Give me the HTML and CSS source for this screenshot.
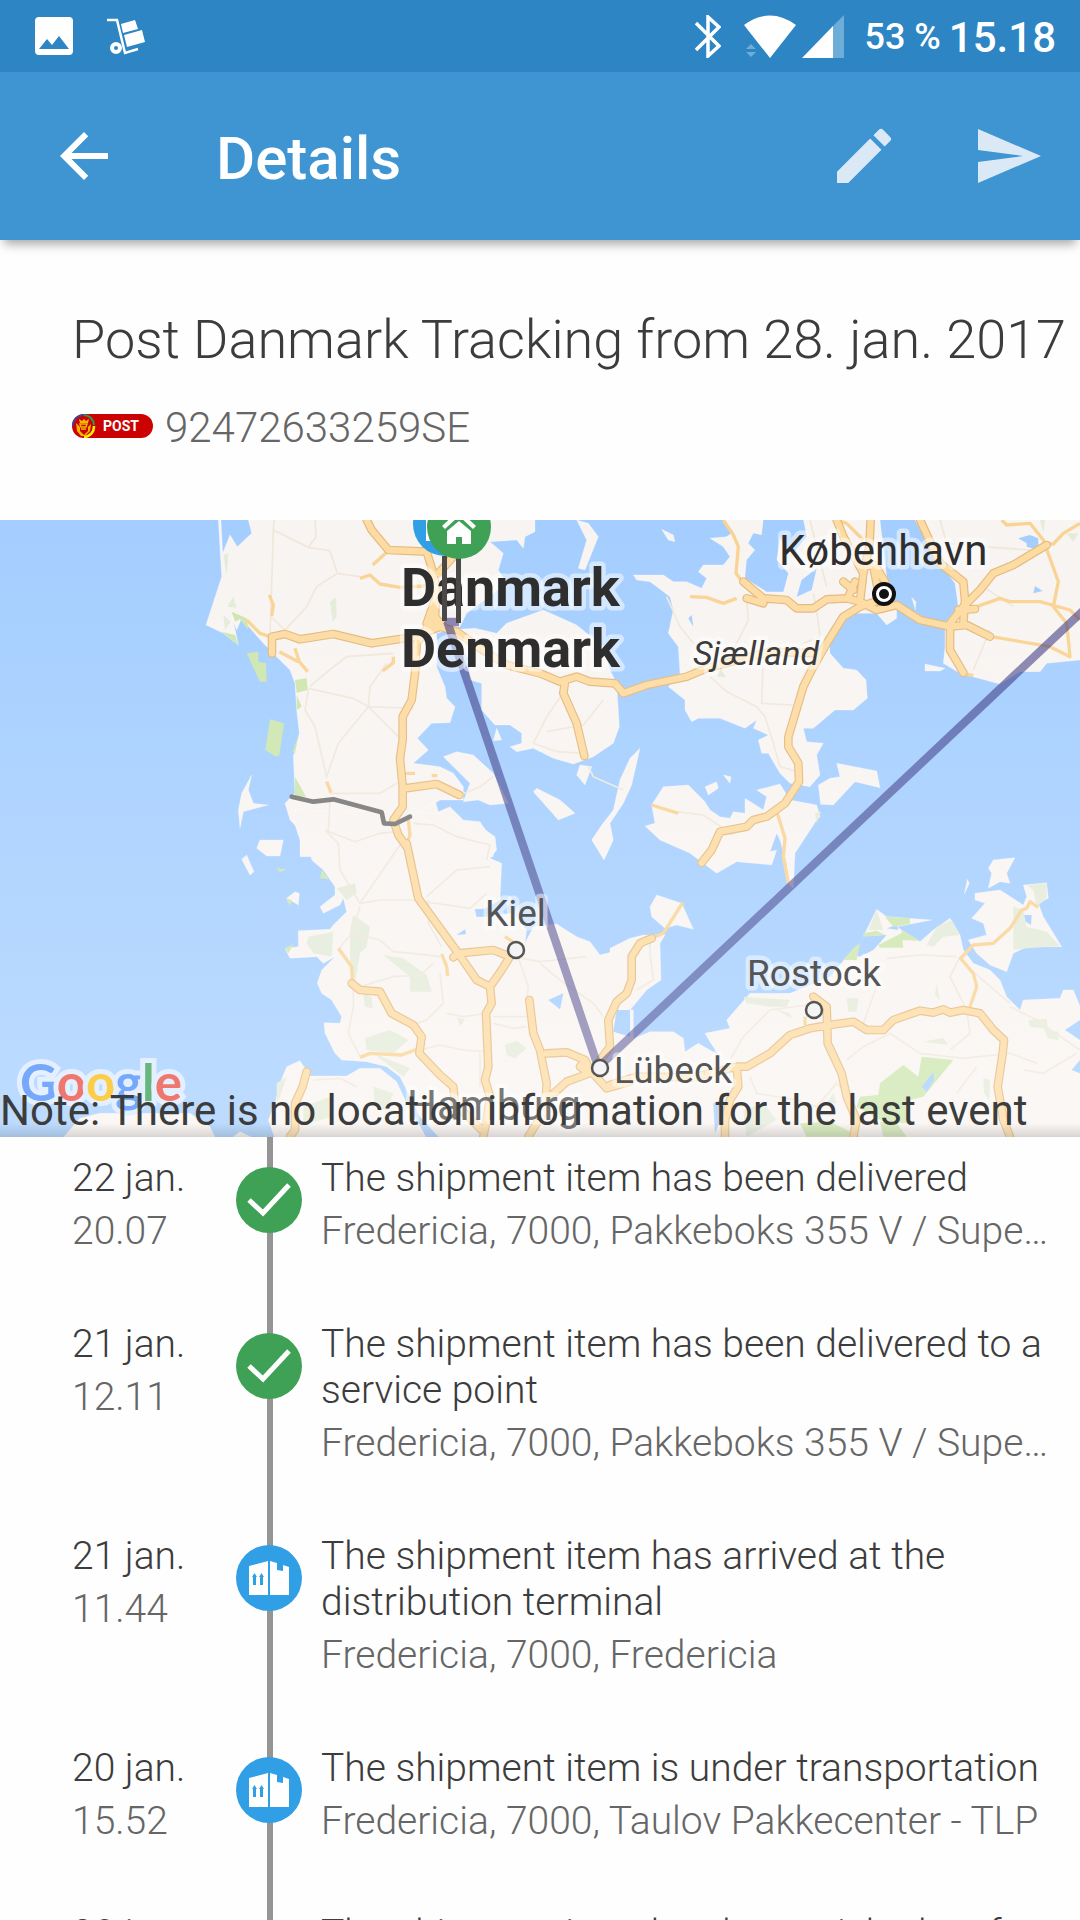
FILE: index.html
```html
<!DOCTYPE html>
<html lang="en">
<head>
  <meta charset="UTF-8" />
  <meta name="viewport" content="width=device-width, initial-scale=1.0"/>
  <title>Details</title>
  <link rel="stylesheet" href="styles.css">
</head>
<body>
  <!-- STATUS BAR -->
  <div class="status-bar">
    <svg class="status-icon" width="38" height="38" viewBox="0 0 38 38"><path fill="#fff" fill-rule="evenodd" d="M4 0h30a4 4 0 0 1 4 4v30a4 4 0 0 1-4 4H4a4 4 0 0 1-4-4V4a4 4 0 0 1 4-4zM4 32h30L24 19l-7 9-5-6z"/></svg>
    <svg class="status-icon" width="38" height="38" viewBox="0 0 38 38">
      <path d="M0 3h10l8 33 13-4" fill="none" stroke="#fff" stroke-width="2.5"/>
      <path fill="#fff" d="M14 7l14-4 3 9-15 4zM17 18l18-5 3 12-18 5z"/>
      <circle cx="9" cy="31" r="4" fill="none" stroke="#fff" stroke-width="4"/>
    </svg>
    <div class="status-right">
      <svg width="26" height="43" viewBox="0 0 26 43"><path d="M1 8l23 23-11 10V2l11 10L1 35" fill="none" stroke="#fff" stroke-width="3.5"/></svg>
      <svg class="wifi" width="52" height="43" viewBox="0 0 52 43"><path fill="#fff" d="M0 10Q26-9 52 10L26 43z"/><path fill="#6fadd9" d="M2 34l5-5 5 5zM2 37h10l-5 5z"/></svg>
      <svg width="42" height="43" viewBox="0 0 42 43"><path fill="#6fadd9" d="M42 0v43H30V12z"/><path fill="#fff" d="M31 11v32H0z"/></svg>
      <span class="battery">53 %</span>
      <span class="clock">15.18</span>
    </div>
  </div>

  <!-- APP BAR -->
  <header class="app-bar">
    <button class="icon-btn" type="button" aria-label="Back">
      <svg viewBox="0 0 24 24"><path fill="#fff" d="M20 11H7.83l5.59-5.59L12 4l-8 8 8 8 1.41-1.41L7.83 13H20v-2z"/></svg>
    </button>
    <h1>Details</h1>
    <button class="icon-btn" type="button" aria-label="Edit">
      <svg viewBox="0 0 24 24"><path fill="#dbe9f7" d="M3 17.25V21h3.75L17.81 9.94l-3.75-3.75L3 17.25zM20.71 7.04a1 1 0 0 0 0-1.41l-2.34-2.34a1 1 0 0 0-1.41 0l-1.83 1.83 3.75 3.75 1.83-1.83z"/></svg>
    </button>
    <button class="icon-btn" type="button" aria-label="Send">
      <svg viewBox="0 0 24 24"><path fill="#dbe9f7" d="M2 21l21-9L2 3v7l15 2-15 2z"/></svg>
    </button>
  </header>

  <section class="parcel">
    <h2>Post Danmark Tracking from 28. jan. 2017</h2>
    <div class="parcel-number">
      <svg width="81" height="28" viewBox="0 0 81 28">
        <rect width="81" height="24" rx="12" fill="#cc0202"/>
        <path d="M1 12A10.500 10.500 0 0 1 12 1" fill="none" stroke="#4b3f91" stroke-width="2"/>
        <path d="M12 1A10.500 10.500 0 0 1 22 11" fill="none" stroke="#2c9a50" stroke-width="2"/>
        <path d="M22 12A10.500 10.500 0 0 1 12 23" fill="none" stroke="#ffee00" stroke-width="2.500"/>
        <path d="M7 5l3 2 2-2 2 2 3-2-1 4H8zM4 9l4 4v4l4 4 4-4v-4l3-3-1 7-5 5H9l-4-5z" fill="#f2b705"/>
        <path d="M8 10h7l-1 3H9zM9 15h5" fill="none" stroke="#f2b705" stroke-width="1.500"/>
        <text class="post-text" x="31" y="17">POST</text>
      </svg>
      <span>92472633259SE</span>
    </div>
  </section>

  <!-- MAP -->
  <section class="map">
    <svg viewBox="0 0 1080 617" preserveAspectRatio="xMidYMid slice">
      <defs>
        <linearGradient id="fade" x1="0" y1="0" x2="0" y2="1">
          <stop offset="0" stop-color="#fff" stop-opacity="0"/>
          <stop offset="1" stop-color="#fff" stop-opacity=".28"/>
        </linearGradient>
        <linearGradient id="edge" x1="0" y1="0" x2="0" y2="1">
          <stop offset="0" stop-color="#000" stop-opacity="0"/>
          <stop offset="1" stop-color="#000" stop-opacity=".14"/>
        </linearGradient>
        <!-- motorways, drawn twice: casing and fill -->
        <g id="motorways" fill="none" stroke-linecap="round" stroke-linejoin="round">
          <g transform="translate(540 -30)">
            <path d="M560 30L575 60 625 120 740 125 760 190 770 240 765 320M820 140L775 190M765 320L710 400 705 490 695 570 668 620 668 690 660 745 668 830 668 890 640 930 655 975 680 1010M276 430V380L315 372 360 388 460 372 575 400 705 380 780 350 830 365 900 415 980 465 1080 490 1140 515 1190 500 1230 515 1305 520 1330 550 1400 525 1520 500 1580 475 1770 425 1920 430M1155 515L1150 550 1190 640 1213 738M675 835L770 822 838 855M765 270L740 340 790 350 765 320"/>
          </g>
          <g transform="translate(1890 -30)">
            <path d="M340 215L400 265 470 270 500 295 550 295 590 268 650 265 690 275 740 300 800 285 870 330 960 350 1010 345 1080 380M350 265L400 280M722 30L718 110 700 190 690 275M670 240L640 215M675 215L655 260M765 215L735 165 690 170M730 170L750 270 690 290M620 30L640 80 700 190M870 30L930 160 1000 215 1005 270 1000 340M1250 105L1150 165 1090 190 1050 240 1000 290 960 340 960 420 1000 488M1035 297L985 300M690 290L640 320 590 400 545 480 520 530 475 680 475 710 505 760 507 815 465 880 410 920 370 930 350 950 270 965 245 1020 215 1058"/>
          </g>
          <g transform="translate(540 900)">
            <path d="M680 70L715 235 835 400 890 480 930 500M820 412L835 400 940 390 990 410 965 450 930 500 935 550 918 580 925 740 915 780 930 830 920 900 910 950M515 490L540 510 600 515 635 580 700 615 725 650 718 700 780 765 820 800 825 850 905 930M1048 540L1060 640 1080 690 1100 790 1095 870 1045 950M1100 700L1160 697 1215 720 1230 750 1280 805 1350 785M1260 740L1215 765 1160 785 1110 830M1215 720L1200 740 1230 760M380 755L368 800 345 850 345 930 330 950"/>
          </g>
          <g transform="translate(1890 900)">
            <path d="M-60 795L20 770 190 772 320 740 350 740 420 700 480 645 540 625 600 615 670 605 710 630 760 630 790 600 870 572 910 578 940 568 960 578 1000 570 1050 580 1090 630 1122 660 1118 700 1103 800 1120 900 1140 950M320 740L325 800 300 840 285 900V950M550 530L590 560 593 670 635 760 650 830 680 900 670 950M65 355L30 370 5 410 5 480-10 520-40 545-65 600-60 680-100 735"/>
          </g>
        </g>
      </defs>

      <rect width="1080" height="617" fill="#a4ceff"/>
      <g transform="scale(.333333)">
        <!-- land -->
        <g fill="#f8f4f1" class="land">
          <g transform="translate(540 -30)">
            <path d="M115 30H123L128 130 150 75 172 110 215 70 205 30H1065V65L1035 80 1030 115 1010 90 930 95 970 130 955 180 980 220 860 310 840 350 770 370 770 470 795 530 800 565 825 590 810 638 755 640 712 685 745 720 700 760 780 770 820 790 850 830 850 870 780 870 690 930 765 870 775 905 810 890 850 930 900 935 940 995V1040H360V960L330 930 315 880 345 850 340 740 358 670 350 600 345 520 330 480 290 440 250 400 215 360 185 325 170 360 158 330 155 310 175 405 130 370 78 345 125 200z"/>
            <path d="M800 360L885 355 950 370 980 340 1090 300 1190 345 1270 410 1290 480 1310 520 1318 650 1300 700 1240 740 1180 762 1120 745 1060 715 1010 725 990 710 1025 700V670L990 645H945L905 600V520L870 510 865 440z"/>
            <path d="M790 740L830 725 880 735 940 790 985 880 930 885 895 870 850 875 870 820z"/>
            <path d="M950 655L965 690 940 692zM1200 765L1235 770 1215 825 1190 795zM1070 835L1140 870 1185 910 1135 930 1060 845zM1350 745L1380 715 1355 825 1330 880 1290 940 1300 990 1272 1050 1235 990 1265 945 1300 900 1320 810zM1190 30L1225 40 1255 80 1215 180 1195 175 1220 90z"/>
            <path d="M215 795L205 840 220 880 265 885 190 905 180 955 175 900 185 850z"/>
          </g>
          <g transform="translate(1890 -30)">
            <path d="M280 30H750L770 200 780 270 800 300V325L770 345 740 310H680L630 335 597 390 600 430 640 475 680 480 708 510 712 565 670 600H615L550 655H520L530 695 580 700 560 735 570 795 540 830 480 820 450 790 415 730H395L385 690 415 675 370 655 380 630 345 655 270 625H205L185 635 165 600V570L115 530 150 490 145 410 115 370 130 300 120 260 60 215 20 210 10 195H100L130 215H170L215 235 230 205 205 185 220 165H280L300 140 280 110 240 85 290 80 310 65z"/>
            <path d="M855 30L890 90 930 160 975 220 985 290 945 340V410L940 460 990 490 1110 522 1170 485H1230L1250 460 1350 450V30zM885 462L945 475 930 483H885zM845 262L858 275 856 300z"/>
            <path d="M620 760L740 783 750 833 675 815 610 885 572 883 565 825 600 805 630 800z"/>
            <path d="M45 948L75 940 65 885 100 830 175 825 225 875 240 900 270 920 300 925 310 905 345 910V865L400 900 410 860 380 840 450 822 480 870 560 885 570 920 560 930 495 1030 490 1135 475 1120 470 1060 450 990 440 970 420 1025 440 1020 425 1065 320 1055 260 1090 180 1030 90 990z"/>
            <path d="M225 830L260 815 265 835 235 855zM280 795L303 800 300 820zM95 58L130 75 135 95 115 90zM410 165L425 152 437 185 430 195z"/>
          </g>
          <g transform="translate(540 900)">
            <path d="M340 0L365 75 390 90 395 120 430 150 465 200V225L420 260 430 280 480 255 490 235 500 275 460 315 450 328 355 332V380L315 385 330 415 410 410 430 430 465 410 425 450 412 490 425 520 455 540 485 590 480 610 432 608 435 640 465 700 485 720 560 725 620 740 660 770 690 830 720 890 780 955H1360V570H1310L1290 540 1320 390 1260 405 1230 365 1190 350 1130 312 1060 320 1035 370 1040 330 1000 280 890 290 885 270 915 265 960 240 965 130 930 115 950 90 945 50 910 25 905 50H880L820 0 780-20 345-30z"/>
            <path d="M360 722L320 740 300 790 285 850 265 900 285 955H740L710 900 680 850 650 785 600 745H540L500 768H390z"/>
            <path d="M-350 952L-300 895-240 880 30 880 90 920 105 952zM160 950L180 935 215 952z"/>
            <path d="M240 60L310 60 300 108H260L230 85zM185 118L200 105 222 155 210 165zM345 215L358 220 355 255 320 235z"/>
          </g>
          <g transform="translate(1890 900)">
            <path d="M80 225L155 250 190 328 140 315 105 325 65 290 60 260z"/>
            <path d="M-60 385L0 355 40 345H105L90 370 93 480 50 510 0 570H-40L-55 600-40 640 0 660 60 635H130L160 655 165 695 205 670 265 705 240 665 225 640 300 625 290 600 360 520H480L530 500 600 470 650 410 690 370 740 268 770 290 905 300 800 320 830 340 870 365 910 330 960 295 990 345 1000 390 1030 430 1080 450 1110 480 1130 530 1170 570 1180 540 1290 535 1300 510 1330 510 1355 570V955H-60z"/>
            <path d="M1035 220L1110 210 1180 255 1190 230 1180 195 1250 188 1255 235 1225 250 1240 290 1295 380H1190L1150 400 1130 455 1080 435 1040 400 1015 360 1070 345 1060 310 1025 295 1065 250 1035 240zM1090 120L1155 113 1130 160 1140 190 1110 185 1075 205 1085 160 1075 145zM1012 178L1018 190 1003 222z"/>
          </g>
        </g>

        <!-- fjords and lakes -->
        <g fill="#a4ceff">
          <path transform="translate(1890 -30)" d="M400 30H520L530 80 490 130 465 120 450 80 440 150 475 190 460 245 410 245 345 205 350 150 375 120 355 100 370 70 395 75zM560 175L545 240 500 260 515 210zM175 325L185 315 190 350zM1165 85L1190 100 1190 110 1225 120V85L1200 75zM1215 228L1238 243 1210 250z"/>
          <path transform="translate(540 900)" d="M885 268L960 265 920 290 890 290zM830 345L855 328 858 342zM1105 540L1150 520 1140 568zM1310 570H1350V650L1300 635z"/>
          <path transform="translate(1890 900)" d="M700 348L770 345 730 390 690 410 670 400zM770 325L800 315 805 330zM1180 285L1205 285 1203 315 1180 300zM1305 630L1350 600V660zM1325 750L1350 720V760zM250 850L270 840 275 890 255 940z"/>
        </g>

        <!-- forests -->
        <g fill="#cde6ae">
          <path transform="translate(540 -30)" d="M200 430L235 425V455L258 460 260 515H240zM270 628L312 640 298 735 288 740 256 720zM345 510L380 505 383 540 350 548zM350 555L365 590 350 600zM345 800L378 860H345zM155 305L200 325 205 360 180 328 165 335zM125 365L165 375 175 405zM355 675L345 730 338 725z"/>
          <path transform="translate(540 900)" d="M425 150L448 178 420 175zM290 145L320 148 300 157zM315 385L340 372 325 400zM316 235L335 240 330 257z"/>
          <path transform="translate(1890 900)" d="M765 290L840 295V312L790 320zM745 375L815 340 820 383 750 383zM815 330L870 362 815 360zM700 340L740 332 765 345 700 350zM670 385L690 370 680 420 640 420zM750 790L820 735 865 770 875 710 970 720 880 830 840 840 830 910 760 905 680 860 690 830 745 825zM510 910L600 905 690 950H530zM750 905L800 910 830 950H760z"/>
        </g>
        <path transform="translate(1890 900)" d="M875 800L910 757 912 780 890 815z" fill="#a4ceff"/>
        <g fill="#e4ebd9">
          <path transform="translate(540 -30)" d="M130 135L145 130 140 195zM160 260L170 293 142 290zM450 275L468 262 470 320 458 335zM130 315L152 335 135 360z"/>
          <path transform="translate(1890 -30)" d="M1230 30H1245L1240 70zM1310 70L1345 70 1330 95zM270 475L288 502 262 500zM555 910L573 905 560 940z"/>
          <path transform="translate(540 900)" d="M470 205L525 190 530 220 500 240zM385 350L460 335 455 410 400 400 380 370zM520 285L570 320 560 380 540 400 525 490 510 440 510 330zM555 655L630 630 685 660 640 700 560 690zM580 700L690 745 670 770zM610 405L670 415 740 465 755 515H690V470zM975 675L1010 662 1040 685 1005 715 980 705zM830 590L855 600 840 618zM550 520L575 530 578 565 555 560zM290 790L320 770 300 830 290 850zM370 860L450 830 455 890 370 915zM580 800L640 820 620 870 585 860z"/>
          <path transform="translate(1890 900)" d="M340 530L480 540 470 560 420 560 350 550zM440 570L480 580 485 595zM650 535H685L680 575 655 575zM915 525L920 490 930 540zM890 375L920 320 965 300 990 345 940 350 910 380zM1190 195L1250 190V235L1220 260 1210 210zM1150 260L1180 270 1190 320 1250 335 1290 378 1190 385 1150 390zM1195 600L1250 597 1255 630 1285 635V660L1255 655 1240 625 1200 620zM880 665L940 653 955 675zM1060 775L1080 780 1078 840 1062 820zM715 330L740 270 760 330zM340 870L400 850 440 900 350 950zM590 850L610 820 620 850z"/>
        </g>

        <!-- local roads -->
        <g fill="none" stroke="#f0e7db" stroke-width="5">
          <path transform="translate(540 -30)" d="M282 30L280 60 385 112 450 122 472 190 410 230 380 290 315 360 272 320 280 60M405 30L408 80 385 112M472 190L540 200M272 320L270 380M390 530L430 495 500 440 640 430M385 535L520 565 565 590 700 595M565 590L570 530 620 460M565 590L475 700 440 800 405 650 375 600 385 540M565 590L655 680M450 850H600L650 820M450 870L445 960M1060 700L1100 620 1155 540M1060 700L1130 725 1215 730M1100 665L1210 645 1270 570M1225 770L1240 800 1330 840M840 855L900 830 940 800"/>
          <path transform="translate(1890 -30)" d="M110 260L150 350 190 400M190 400L300 440 355 330 350 270M240 500L290 545 380 590 405 620M400 440L395 580 490 585M405 620L430 700 450 770 520 790M550 250L560 300 570 380 520 400M1050 110L1200 120M1060 230L1150 290M1030 480L1080 360M930 30L950 100 1080 110M140 905L220 915 310 975M540 30L590 230"/>
          <path transform="translate(540 900)" d="M435 30L525 65 600 40 650 35M435 30L475 70 480 150 540 250 660 75M540 250L600 240H700L870 265 920 220M740 230L830 150 930 140M700 10L760 15 830 50 930 75 920 120M540 260L515 340 600 360 640 395 700 400 780 410M515 340L478 385M540 500L640 470 720 465 760 430M745 240V310L785 380M780 460L790 550 740 600 710 610M520 490V560L505 640 540 710M800 580L850 590 920 580M720 690L780 675 850 690 910 695M1010 400L1045 500 1040 540M1000 410L1080 425 1220 410M1080 430L1140 480 1240 550 1270 590M940 590L1040 590M940 610L1000 625 1040 620M900 700V800M400 780L480 775 530 800"/>
          <path transform="translate(1890 900)" d="M300 720L340 650 420 570 530 555M610 600L700 610 740 500 720 430M770 415L870 405 980 410M650 720L700 680 780 640 870 700 1000 715 1140 700 1220 730M990 410L960 470 1010 570 1020 640 960 690M1035 460L1140 550M1180 750L1240 760 1340 700M980 820L1040 740M360 770L380 820 500 840 560 860 620 790 660 830M1140 560L1220 600 1350 690M60 360V400L70 480 20 510"/>
        </g>

        <!-- main roads -->
        <g fill="none" stroke="#f9d393" stroke-width="10" stroke-linejoin="round">
          <path transform="translate(540 -30)" d="M200 330L240 370 276 382M298 425L355 455M345 415L358 455 383 485M268 255L280 285 275 318M578 165L625 122M540 205L570 195 600 222 660 232 735 228M608 483L640 458V440M440 815L453 848M675 790H705M755 797H772M685 930L690 975 680 1000"/>
          <path transform="translate(1890 -30)" d="M280 30L310 75 325 110 318 190 340 220M180 260L230 262 280 280 320 265M620 30L650 40 700 90M1115 30L1130 45 1200 40 1240 90 1285 215 1270 290 1310 340 1320 440 1260 410 1085 380M1040 290L1110 265 1140 275 1230 275 1320 300 1350 330M1350 40L1300 70 1270 102 1240 100M442 910L465 985 460 1040 475 1120M65 885L145 910M1000 490L1030 497"/>
          <path transform="translate(540 900)" d="M475 385L515 440 518 490M540 712L570 700 665 705 710 688M785 402L800 440 803 468M975 350L1005 370"/>
          <path transform="translate(1890 900)" d="M1225 262L1200 245 1190 265 1175 270 1140 325 1090 370 1030 375 992 415 1030 460 1040 500 1020 560M158 248L100 340 65 355M550 525H540M525 615V590"/>
        </g>
        <use href="#motorways" stroke="#e4b97b" stroke-width="26"/>
        <use href="#motorways" stroke="#fddba2" stroke-width="19"/>

        <!-- border -->
        <path transform="translate(540 -30)" d="M335 860L400 875 460 868 605 907 612 940 645 942 690 920" fill="none" stroke="#757575" stroke-width="14" stroke-linecap="round" stroke-linejoin="round"/>

        <!-- parcel route -->
        <path d="M1377 306H1342L1795 1642 3260 262" fill="none" stroke="#2b2777" stroke-opacity=".56" stroke-width="25" stroke-linejoin="bevel"/>
      </g>

      <rect width="1080" height="617" fill="url(#fade)"/>

      <!-- towns -->
      <circle cx="884" cy="74" r="10" fill="#fff" stroke="#111" stroke-width="4"/>
      <circle cx="884" cy="74" r="5" fill="#111"/>
      <g fill="#f4f4f4" stroke="#555" stroke-width="2.500">
        <circle cx="516" cy="430" r="8"/>
        <circle cx="600" cy="548" r="8"/>
        <circle cx="814" cy="490" r="8"/>
      </g>
      <g class="labels">
        <text class="country" x="401" y="86">Danmark</text>
        <text class="country" x="401" y="147">Denmark</text>
        <text class="capital" x="779" y="45">København</text>
        <text class="island" x="693" y="145">Sjælland</text>
        <text class="town" x="485" y="406">Kiel</text>
        <text class="town" x="747" y="466">Rostock</text>
        <text class="town" x="614" y="563">Lübeck</text>
        <text class="city" x="407" y="600">Hamburg</text>
      </g>

      <!-- pins -->
      <g fill="#4b4948">
        <rect x="442" y="36" width="5" height="65"/>
        <rect x="456" y="38" width="5" height="65"/>
      </g>
      <circle cx="445" cy="4" r="32" fill="#319fe5"/>
      <rect x="426" y="-14" width="38" height="35" fill="#fff"/>
      <circle cx="459" cy="7" r="32" fill="#3fa156"/>
      <path fill="#fff" d="M459 1l12 10v13h-9v-7h-6v7h-9V11zM442 6l17-16 17 16-3 3-14-13-14 13z"/>

      <text class="google" x="20" y="581"><tspan fill="#76a9fb">G</tspan><tspan fill="#ef776d">o</tspan><tspan fill="#fdcd45">o</tspan><tspan fill="#76a9fb">g</tspan><tspan fill="#67b77d">l</tspan><tspan fill="#ef776d">e</tspan></text>
      <rect y="603" width="1080" height="14" fill="url(#edge)"/>
    </svg>
    <p class="map-note">Note: There is no location information for the last event</p>
  </section>

  <svg class="symbols">
    <symbol id="check" viewBox="0 0 66 66">
      <circle cx="33" cy="33" r="33" fill="#3fa156"/>
      <path d="M13 33l14 13 26-28" fill="none" stroke="#fff" stroke-width="5"/>
    </symbol>
    <symbol id="box" viewBox="0 0 66 66">
      <circle cx="33" cy="33" r="33" fill="#319fe5"/>
      <path fill="#fff" d="M13 21l19-5v34H13zM34 16l7 2v7l6 1v-6l6 2v28H34z"/>
      <path fill="#319fe5" d="M17 40v-8h-1l2.500-4 2.500 4h-1v8zM24 40v-8h-1l2.500-4 2.500 4h-1v8z"/>
    </symbol>
  </svg>

  <!-- EVENTS -->
  <ul class="events">
    <li class="event">
      <div class="when"><span>22 jan.</span><span class="sub">20.07</span></div>
      <div class="rail"><svg><use href="#check"/></svg></div>
      <div class="what"><span>The shipment item has been delivered</span><span class="sub">Fredericia, 7000, Pakkeboks 355 V / SuperBrugsen Fredericia</span></div>
    </li>
    <li class="event">
      <div class="when"><span>21 jan.</span><span class="sub">12.11</span></div>
      <div class="rail"><svg><use href="#check"/></svg></div>
      <div class="what"><span>The shipment item has been delivered to a service point</span><span class="sub">Fredericia, 7000, Pakkeboks 355 V / SuperBrugsen Fredericia</span></div>
    </li>
    <li class="event">
      <div class="when"><span>21 jan.</span><span class="sub">11.44</span></div>
      <div class="rail"><svg><use href="#box"/></svg></div>
      <div class="what"><span>The shipment item has arrived at the distribution terminal</span><span class="sub">Fredericia, 7000, Fredericia</span></div>
    </li>
    <li class="event">
      <div class="when"><span>20 jan.</span><span class="sub">15.52</span></div>
      <div class="rail"><svg><use href="#box"/></svg></div>
      <div class="what"><span>The shipment item is under transportation</span><span class="sub">Fredericia, 7000, Taulov Pakkecenter - TLP</span></div>
    </li>
    <li class="event">
      <div class="when"><span>20 jan.</span></div>
      <div class="rail"></div>
      <div class="what"><span>The shipment item has been picked up for delivery</span></div>
    </li>
  </ul>
</body>
</html>
```
FILE: styles.css
```css
* {
  box-sizing: border-box;
}

body {
  margin: 0;
  height: 100vh;
  display: flex;
  flex-direction: column;
  overflow: hidden;
  background: #fefefe;
  color: #3c3c3c;
  font-family: Roboto, sans-serif;
  font-weight: 300;
}

h1, h2, p, ul {
  margin: 0;
  padding: 0;
}

.status-bar {
  flex: none;
  height: 72px;
  padding: 0 24px 0 35px;
  display: flex;
  align-items: center;
  background: #2d85c3;
  color: #fff;
  font-weight: 500;
}

.status-icon {
  margin-right: 34px;
}

.status-right {
  margin-left: auto;
  display: flex;
  align-items: center;
}

.wifi {
  margin: 0 6px 0 23px;
}

.battery {
  margin: 0 8px 0 20px;
  padding-top: 2px;
  font-size: 36px;
}

.clock {
  padding-top: 2px;
  font-size: 42px;
}

.app-bar {
  flex: none;
  position: relative;
  z-index: 1;
  height: 168px;
  padding: 0 36px 0 48px;
  display: flex;
  align-items: center;
  gap: 72px;
  background: #3e95d2;
  color: #fff;
  box-shadow: 0 8px 10px -4px rgba(0,0,0,0.35);
}

.app-bar h1 {
  flex: 1;
  padding: 4px 0 0 24px;
  font-size: 60px;
  font-weight: 500;
}

.icon-btn {
  width: 72px;
  height: 72px;
  padding: 0;
  border: none;
  background: none;
}

.icon-btn svg {
  display: block;
}

.parcel {
  flex: none;
  padding: 68px 0 67px 72px;
}

.parcel h2 {
  font-size: 54px;
  line-height: 64px;
  font-weight: 300;
  white-space: nowrap;
}

.parcel-number {
  margin-top: 31px;
  display: flex;
  align-items: center;
  gap: 12px;
  font-size: 42px;
  line-height: 50px;
  color: #666;
}

.post-text {
  font-size: 14px;
  font-weight: 700;
  fill: #fff;
}

.map {
  flex: none;
  position: relative;
  height: 617px;
}

.map svg {
  display: block;
  width: 100%;
  height: 100%;
}

.map-note {
  position: absolute;
  left: 0;
  bottom: 0;
  font-size: 42px;
  line-height: 52px;
  font-weight: 400;
  white-space: nowrap;
}

.land {
  stroke: #fff;
  stroke-opacity: 0.4;
  stroke-width: 2;
}

.labels {
  font-weight: 400;
  paint-order: stroke;
  stroke: #fff;
  stroke-opacity: 0.5;
  stroke-width: 9px;
  stroke-linejoin: round;
}

.country {
  font-size: 54px;
  font-weight: 700;
  fill: #2e2e2e;
}

.capital {
  font-size: 42px;
  fill: #2e2e2e;
}

.island {
  font-size: 34px;
  font-style: italic;
  fill: #3c3c3c;
}

.town {
  font-size: 37px;
  fill: #555;
}

.city {
  font-size: 42px;
  fill: #777;
}

.google {
  font-family: Lato, sans-serif;
  font-size: 51px;
  font-weight: 700;
  paint-order: stroke;
  stroke: #e4f0ff;
  stroke-width: 10px;
}

.symbols {
  display: none;
}

.events {
  flex: 1;
  overflow: hidden;
  list-style: none;
  font-size: 39px;
  line-height: 46px;
}

.event {
  display: flex;
  padding-right: 24px;
}

.event span {
  display: block;
}

.event .sub {
  margin-top: 7px;
  color: #666;
  white-space: nowrap;
  overflow: hidden;
  text-overflow: ellipsis;
}

.when {
  width: 236px;
  padding: 18px 0 49px 72px;
}

.rail {
  width: 67px;
  padding-top: 30px;
  background: linear-gradient(#959595, #959595) 31px 0 / 6px 100% no-repeat;
}

.rail svg {
  display: block;
  width: 66px;
  height: 66px;
}

.what {
  flex: 1;
  min-width: 0;
  padding: 18px 0 49px 18px;
}
```
